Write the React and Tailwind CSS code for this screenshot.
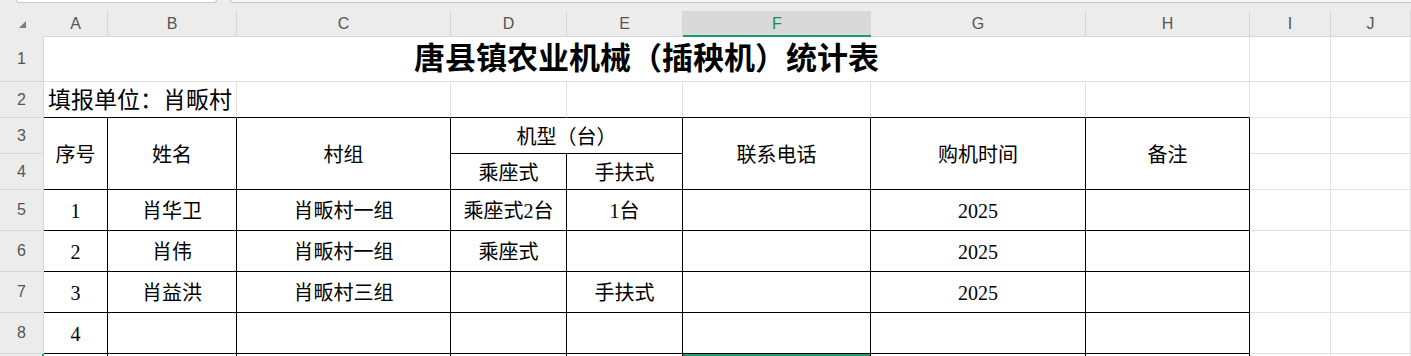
import React from "react";

const HDR = "bg-[#ececec] border-r border-b border-[#d6d6d6] flex items-center justify-center text-[16px] text-[#555] font-['Liberation_Sans',sans-serif]";
const ROWH = "bg-[#ececec] border-r border-b border-[#d6d6d6] flex items-center justify-center text-[16px] text-[#555] font-['Liberation_Sans',sans-serif]";
const GRAY = "border-r border-b border-[#e1e1e1]";
const BLK = "border-r border-b border-black flex items-center justify-center text-[20px] text-black pt-[2px]";

const cols = ["A", "B", "C", "D", "E", "F", "G", "H", "I", "J"];

const data = [
  ["1", "肖华卫", "肖畈村一组", "乘座式2台", "1台", "", "2025", ""],
  ["2", "肖伟", "肖畈村一组", "乘座式", "", "", "2025", ""],
  ["3", "肖益洪", "肖畈村三组", "", "手扶式", "", "2025", ""],
  ["4", "", "", "", "", "", "", ""],
];

export default function App() {
  return (
    <div className="w-[1411px] h-[356px] overflow-hidden bg-white font-['Liberation_Serif','Noto_Sans_CJK_SC',serif]">
      <div className="h-[11px] bg-[#ececec] flex items-start">
        <div className="ml-[16px] w-[201px] h-[3px] bg-white border-x border-b border-[#c6c6c6] rounded-b-[5px]" />
        <div className="ml-[13px] flex-1 h-[3px] bg-[#f6f6f6] border-l border-b border-[#c6c6c6] rounded-bl-[5px]" />
      </div>
      <div className="grid grid-cols-[44px_64px_129px_214px_116px_116px_188px_215px_164px_81px_1fr] grid-rows-[26px_45px_36px_36px_36px_41px_41px_41px_41px_10px]">
        {/* header row */}
        <div className="bg-[#ececec] flex items-end pl-[19px] pb-[9px]">
          <svg width="7" height="7" viewBox="0 0 7 7">
            <polygon points="7,0 7,7 0,7" fill="#7d7d7d" />
          </svg>
        </div>
        {cols.map((c) =>
          c === "F" ? (
            <div
              key={c}
              className="bg-[#d9d9d9] border-b-2 border-b-[#1b9a6b] flex items-center justify-center text-[16px] text-[#1b8a60] font-['Liberation_Sans',sans-serif] pt-[1px]"
            >
              {c}
            </div>
          ) : (
            <div key={c} className={HDR}>
              {c}
            </div>
          )
        )}

        {/* row 1 */}
        <div className={ROWH}>1</div>
        <div className="col-span-8 border-r border-b border-[#e1e1e1] flex items-center justify-center text-[31px] font-bold text-black">
          唐县镇农业机械（插秧机）统计表
        </div>
        <div className={GRAY} />
        <div className={GRAY} />

        {/* row 2 */}
        <div className={ROWH}>2</div>
        <div className="col-span-2 border-r border-r-[#e1e1e1] border-b border-b-black flex items-center pl-[4px] pt-[4px] text-[23px] text-black whitespace-nowrap">
          填报单位：肖畈村
        </div>
        <div className="border-r border-r-[#e1e1e1] border-b border-b-black" />
        <div className="border-r border-r-[#e1e1e1] border-b border-b-black" />
        <div className="border-r border-r-[#e1e1e1] border-b border-b-black" />
        <div className="border-r border-r-[#e1e1e1] border-b border-b-black" />
        <div className="border-r border-r-[#e1e1e1] border-b border-b-black" />
        <div className="border-r border-r-[#e1e1e1] border-b border-b-black" />
        <div className={GRAY} />
        <div className={GRAY} />

        {/* row 3 */}
        <div className={ROWH}>3</div>
        <div className={`${BLK} row-span-2`}>序号</div>
        <div className={`${BLK} row-span-2`}>姓名</div>
        <div className={`${BLK} row-span-2`}>村组</div>
        <div className={`${BLK} col-span-2`}>机型（台）</div>
        <div className={`${BLK} row-span-2`}>联系电话</div>
        <div className={`${BLK} row-span-2`}>购机时间</div>
        <div className={`${BLK} row-span-2`}>备注</div>
        <div className={GRAY} />
        <div className={GRAY} />

        {/* row 4 */}
        <div className={ROWH}>4</div>
        <div className={BLK}>乘座式</div>
        <div className={BLK}>手扶式</div>
        <div className={GRAY} />
        <div className={GRAY} />

        {/* data rows */}
        {data.map((r, i) => (
          <React.Fragment key={i}>
            <div className={ROWH}>{i + 5}</div>
            {r.map((v, j) => (
              <div key={j} className={BLK}>
                {v}
              </div>
            ))}
            <div className={GRAY} />
            <div className={GRAY} />
          </React.Fragment>
        ))}

        {/* row 9 (partial) */}
        <div className="bg-[#ececec] border-r-2 border-r-[#1b9a6b]" />
        <div className="border-r border-black" />
        <div className="border-r border-black" />
        <div className="border-r border-black" />
        <div className="border-r border-black" />
        <div className="border-r border-black" />
        <div className="border-r border-black">
          <div className="h-[3px] bg-[#1b9a6b]" />
        </div>
        <div className="border-r border-black" />
        <div className="border-r border-black" />
        <div className="border-r border-[#e1e1e1]" />
        <div className="border-r border-[#e1e1e1]" />
      </div>
    </div>
  );
}
